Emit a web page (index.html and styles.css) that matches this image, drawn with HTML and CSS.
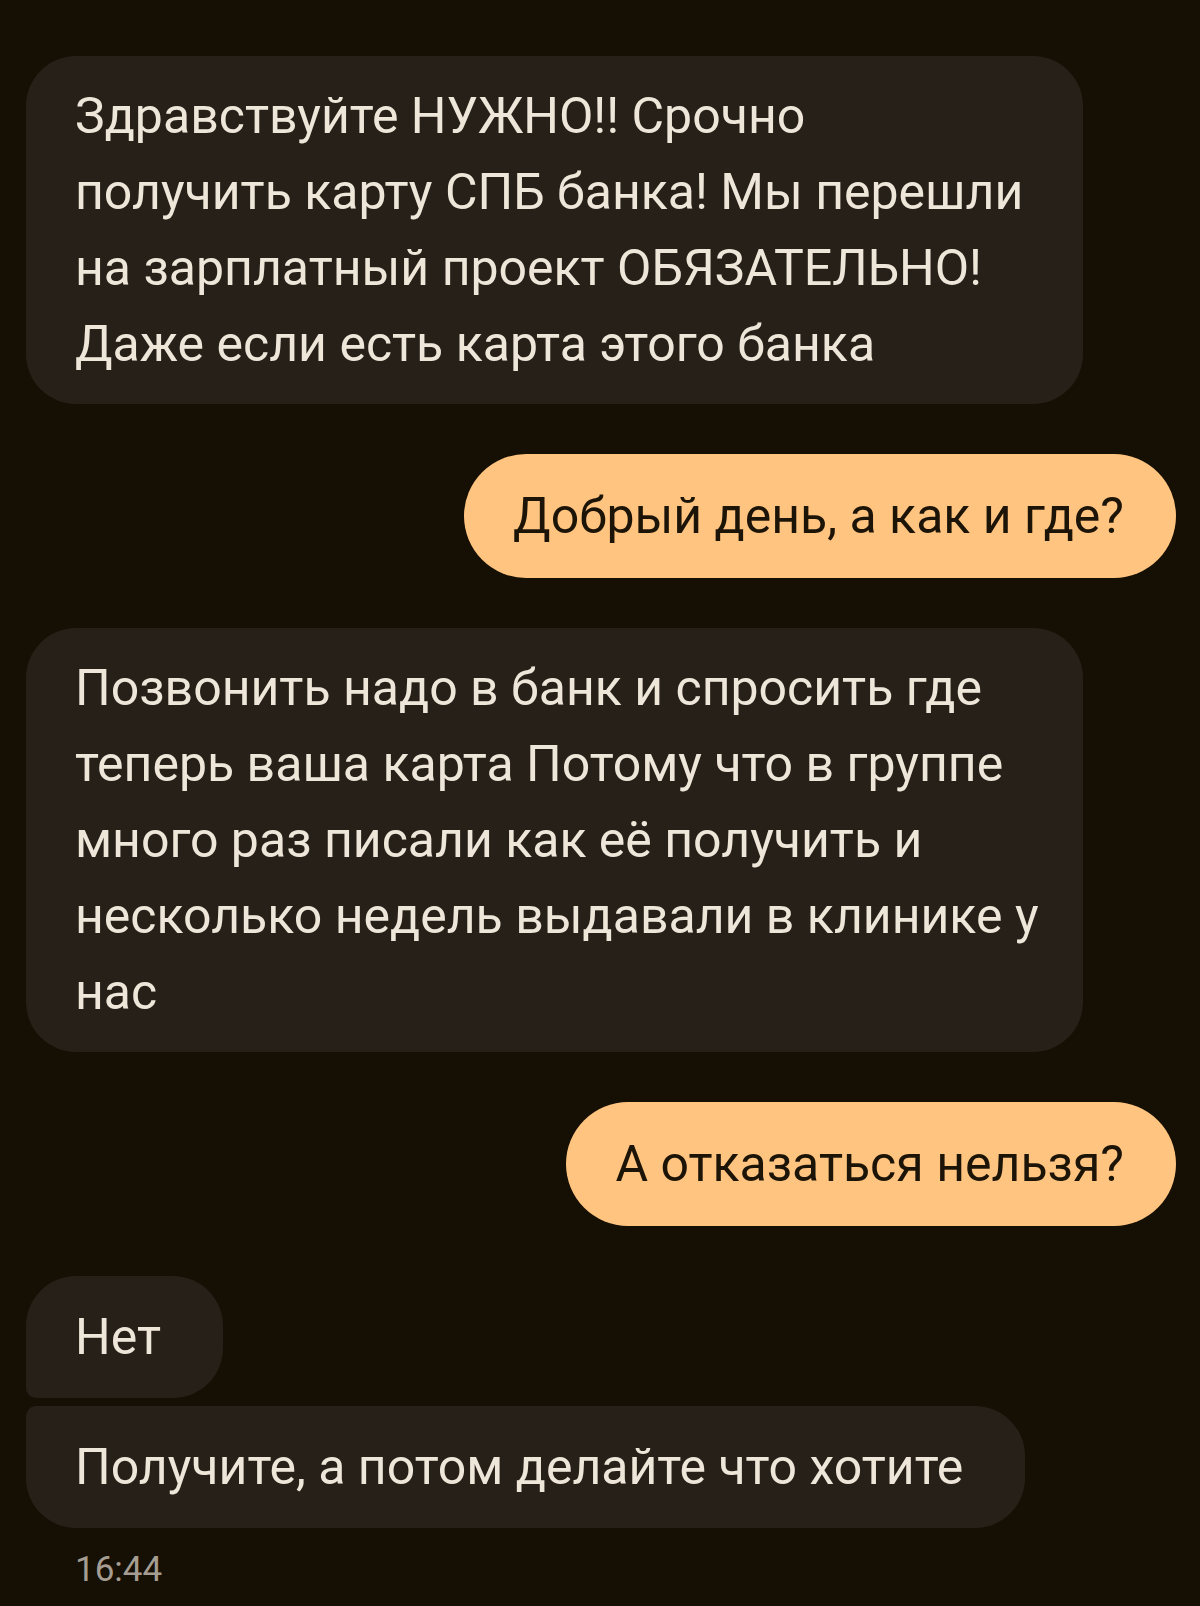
FILE: index.html
```html
<!DOCTYPE html>
<html lang="ru">
<head>
<meta charset="utf-8">
<title>Чат</title>
<link rel="stylesheet" href="styles.css">
</head>
<body>
<div class="chat">
  <div class="group">
    <div class="msg in wide">Здравствуйте НУЖНО!! Срочно<br>получить карту СПБ банка! Мы перешли<br>на зарплатный проект ОБЯЗАТЕЛЬНО!<br>Даже если есть карта этого банка</div>
  </div>
  <div class="group out-group">
    <div class="msg out">Добрый день, а как и где?</div>
  </div>
  <div class="group">
    <div class="msg in wide">Позвонить надо в банк и спросить где<br>теперь ваша карта Потому что в группе<br>много раз писали как её получить и<br>несколько недель выдавали в клинике у<br>нас</div>
  </div>
  <div class="group out-group">
    <div class="msg out">А отказаться нельзя?</div>
  </div>
  <div class="group">
    <div class="msg in first">Нет</div>
    <div class="msg in last">Получите, а потом делайте что хотите</div>
    <div class="time">16:44</div>
  </div>
</div>
</body>
</html>
```
FILE: styles.css
```css
html, body {
  margin: 0;
  padding: 0;
  background: #160f04;
}
body {
  width: 1200px;
  height: 1606px;
  overflow: hidden;
  font-family: Roboto, "Noto Sans", sans-serif;
}
.chat {
  display: flex;
  flex-direction: column;
  gap: 50px;
  padding: 56px 24px 0 26px;
}
.group {
  display: flex;
  flex-direction: column;
  align-items: flex-start;
  gap: 8px;
}
.out-group {
  align-items: flex-end;
}
.msg {
  font-size: 50px;
  line-height: 76px;
  padding: 23px 62px 23px 49px;
  border-radius: 50px;
  max-width: 1057px;
  box-sizing: border-box;
}
.in {
  background: #272019;
  color: #efe6da;
}
.wide {
  width: 1057px;
  padding: 22px 30px 22px 49px;
  white-space: nowrap;
}
.out {
  background: #ffc47f;
  color: #1d1408;
  padding: 24px 52px 24px 49px;
  border-radius: 62px;
}
.first {
  border-radius: 50px 50px 50px 10px;
}
.last {
  border-radius: 10px 50px 50px 50px;
}
.time {
  margin-top: 14px;
  padding-left: 49px;
  font-size: 35px;
  line-height: 40px;
  color: #a59d92;
}
```
